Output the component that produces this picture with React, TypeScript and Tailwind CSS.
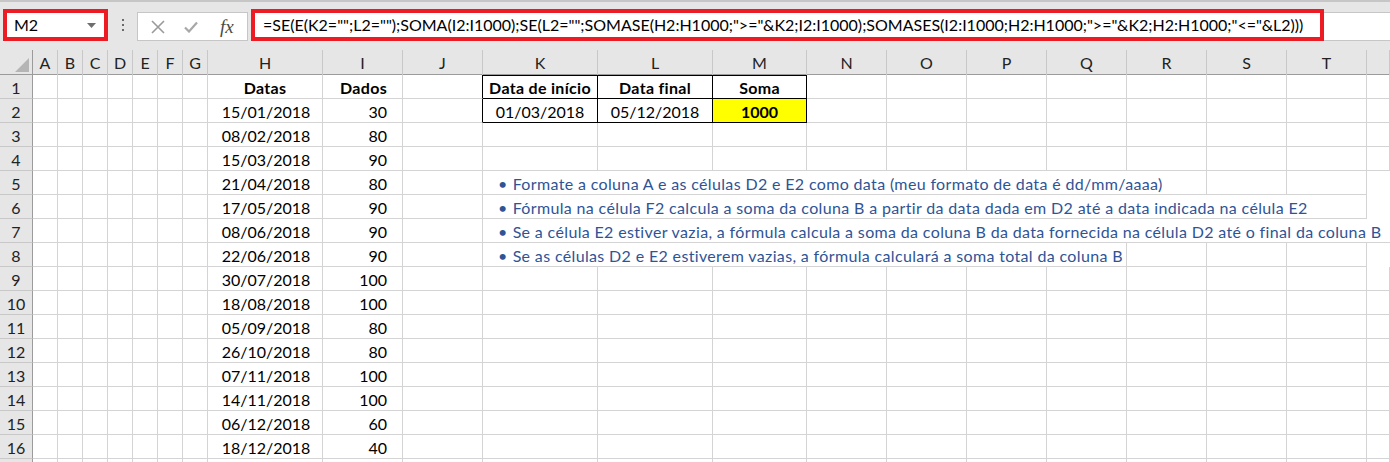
import React from 'react';

const COLS = ['A', 'B', 'C', 'D', 'E', 'F', 'G', 'H', 'I', 'J', 'K', 'L', 'M', 'N', 'O', 'P', 'Q', 'R', 'S', 'T', ''];

const GRID = 'grid grid-cols-[33px_repeat(7,25px)_115px_80px_80px_115px_115px_94px_repeat(7,80px)_1fr]';

const data: [string, string][] = [
    ['15/01/2018', '30'],
    ['08/02/2018', '80'],
    ['15/03/2018', '90'],
    ['21/04/2018', '80'],
    ['17/05/2018', '90'],
    ['08/06/2018', '90'],
    ['22/06/2018', '90'],
    ['30/07/2018', '100'],
    ['18/08/2018', '100'],
    ['05/09/2018', '80'],
    ['26/10/2018', '80'],
    ['07/11/2018', '100'],
    ['14/11/2018', '100'],
    ['06/12/2018', '60'],
    ['18/12/2018', '40'],
];

// notes in K5:K8, each spilling over to the column where its text ends
const notes: Record<number, { text: string; span: number }> = {
    5: { text: 'Formate a coluna A e as células D2 e E2 como data (meu formato de data é dd/mm/aaaa)', span: 8 },
    6: { text: 'Fórmula na célula F2 calcula a soma da coluna B a partir da data dada em D2 até a data indicada na célula E2', span: 10 },
    7: { text: 'Se a célula E2 estiver vazia, a fórmula calcula a soma da coluna B da data fornecida na célula D2 até o final da coluna B', span: 11 },
    8: { text: 'Se as células D2 e E2 estiverem vazias, a fórmula calculará a soma total da coluna B', span: 7 },
};

const spanClass: Record<number, string> = {
    7: 'col-span-7',
    8: 'col-span-8',
    10: 'col-span-10',
    11: 'col-span-11',
};

function Cell({ children, className = '' }: { children?: React.ReactNode; className?: string }) {
    return (
        <div className={`h-[24px] pt-[2px] border-r border-b border-[#d4d4d4] flex items-center whitespace-nowrap ${className}`}>
            {children}
        </div>
    );
}

function FormulaBar() {
    return (
        <div className="h-[50px] bg-[#e6e6e6] border-t-2 border-[#c6c6c6] flex items-start pt-[7px] pl-[3px]">
            <div className="w-[105px] h-[32px] bg-white border-4 border-[#ed1c24] flex items-center pl-[7px] pr-[8px]">
                <span className="text-[16px] text-black flex-1">M2</span>
                <svg width="9" height="5" viewBox="0 0 9 5">
                    <path d="M0 0h9L4.5 5z" fill="#6e6e6e" />
                </svg>
            </div>
            <div className="w-[29px] h-[32px] flex flex-col items-center justify-center gap-[3px]">
                <span className="w-[2px] h-[2px] bg-[#6a6a6a]" />
                <span className="w-[2px] h-[2px] bg-[#6a6a6a]" />
                <span className="w-[2px] h-[2px] bg-[#6a6a6a]" />
            </div>
            <div className="mt-[3px] w-[111px] h-[29px] bg-white border border-[#c6c6c6] flex items-center">
                <svg className="ml-[13px]" width="14" height="14" viewBox="0 0 14 14">
                    <path d="M1 1l12 12M13 1L1 13" stroke="#9a9a9a" strokeWidth="1.6" fill="none" />
                </svg>
                <svg className="ml-[19px]" width="14" height="12" viewBox="0 0 14 12">
                    <path d="M1 6.5l4 4L13 1.5" stroke="#a8a8a8" strokeWidth="2.2" fill="none" />
                </svg>
                <span className="ml-[22px] text-[19px] italic text-[#4a4a4a] font-['Liberation_Serif',serif] leading-none">
                    fx
                </span>
            </div>
            <div className="ml-[3px] w-[1073px] h-[32px] bg-white border-4 border-[#ed1c24] flex items-center pl-[8px]">
                <span className="text-[16px] text-black whitespace-nowrap">
                    =SE(E(K2="";L2="");SOMA(I2:I1000);SE(L2="";SOMASE(H2:H1000;"&gt;="&amp;K2;I2:I1000);SOMASES(I2:I1000;H2:H1000;"&gt;="&amp;K2;H2:H1000;"&lt;="&amp;L2)))
                </span>
            </div>
            <div className="flex-1 mt-[3px] h-[29px] bg-white border-y border-[#c6c6c6]" />
        </div>
    );
}

function HeaderRow() {
    return (
        <div className={`${GRID} h-[25px] bg-[#e6e6e6] border-b border-[#9b9b9b]`}>
            <div className="border-r border-[#9b9b9b] flex items-end justify-end pr-[3px] pb-[3px]">
                <svg width="14" height="14" viewBox="0 0 14 14">
                    <path d="M14 0v14H0z" fill="#b5b5b5" />
                </svg>
            </div>
            {COLS.map((c, i) => (
                <div key={i} className="border-r border-[#c8c8c8] flex items-center justify-center pt-[1px] text-[16px] text-[#222]">
                    {c}
                </div>
            ))}
        </div>
    );
}

function RowHeader({ n }: { n: number }) {
    return (
        <div className="h-[24px] pt-[2px] bg-[#e6e6e6] border-r border-b border-r-[#9b9b9b] border-b-[#c8c8c8] flex items-center justify-center text-[16px] text-[#222]">
            {n < 17 ? n : ''}
        </div>
    );
}

function Row({ n }: { n: number }) {
    const note = notes[n];
    const cells: React.ReactNode[] = [];

    // A..G
    for (let i = 0; i < 7; i++) cells.push(<Cell key={'a' + i} />);

    // H, I
    if (n === 1) {
        cells.push(<Cell key="h" className="justify-center font-bold tracking-[0.3px]">Datas</Cell>);
        cells.push(<Cell key="i" className="justify-end pr-[15px] font-bold tracking-[0.3px]">Dados</Cell>);
    } else if (n <= 16) {
        const [d, v] = data[n - 2];
        cells.push(<Cell key="h" className="justify-center pl-[2px]">{d}</Cell>);
        cells.push(<Cell key="i" className="justify-end pr-[15px]">{v}</Cell>);
    } else {
        cells.push(<Cell key="h" />);
        cells.push(<Cell key="i" />);
    }

    const boxed = n === 1 || n === 2;
    cells.push(<Cell key="j" className={boxed ? 'border-r-black' : ''} />);

    if (n === 1) {
        cells.push(<Cell key="k" className="justify-center font-bold tracking-[0.3px] border-t border-black border-r-black border-b-black">Data de início</Cell>);
        cells.push(<Cell key="l" className="justify-center font-bold tracking-[0.3px] border-t border-black border-r-black border-b-black">Data final</Cell>);
        cells.push(<Cell key="m" className="justify-center font-bold tracking-[0.3px] border-t border-black border-r-black border-b-black">Soma</Cell>);
    } else if (n === 2) {
        cells.push(<Cell key="k" className="justify-center border-r-black border-b-black">01/03/2018</Cell>);
        cells.push(<Cell key="l" className="justify-center border-r-black border-b-black">05/12/2018</Cell>);
        cells.push(<Cell key="m" className="justify-center font-bold bg-[#ffff00] border-r-black border-b-black">1000</Cell>);
    }

    if (note) {
        cells.push(
            <div key="note" className={`${spanClass[note.span]} h-[24px] pt-[2px] border-b border-[#d4d4d4] flex items-center pl-[15px] whitespace-nowrap text-[#2f5496] tracking-[0.35px] ${note.span === 11 ? '' : 'border-r'}`}>
                <span className="mr-[5px]">•</span>
                {note.text}
            </div>
        );
        for (let i = 11 + note.span; i < 21; i++) cells.push(<Cell key={'r' + i} />);
    } else {
        const from = n <= 2 ? 14 : 11;
        for (let i = from; i < 22; i++) cells.push(<Cell key={'r' + i} />);
    }

    return (
        <div className={GRID}>
            <RowHeader n={n} />
            {cells}
        </div>
    );
}

export default function App() {
    const rows = Array.from({ length: 17 }, (_, i) => i + 1);
    return (
        <div className="w-[1390px] h-[462px] overflow-hidden bg-white font-['Lato',sans-serif] text-[16px] text-black">
            <FormulaBar />
            <HeaderRow />
            {rows.map((n) => (
                <Row key={n} n={n} />
            ))}
        </div>
    );
}
